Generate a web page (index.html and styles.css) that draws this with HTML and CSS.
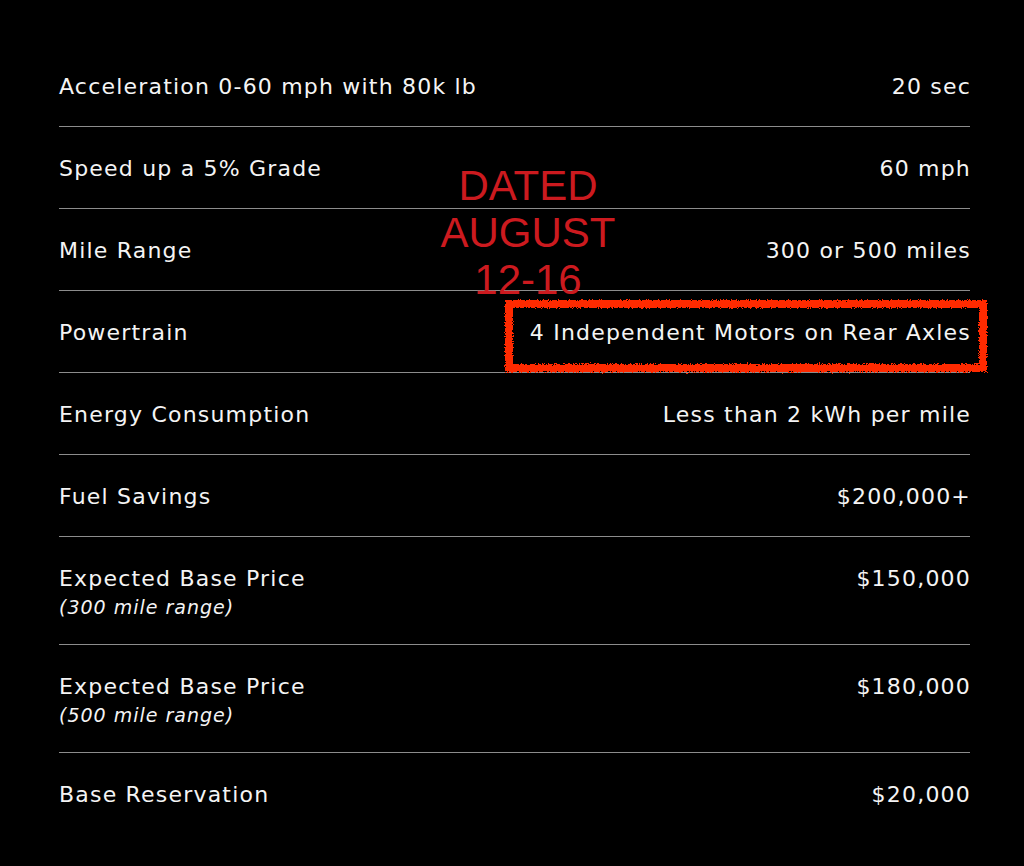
FILE: index.html
```html
<!DOCTYPE html>
<html lang="en">
<head>
<meta charset="utf-8">
<title>Specs</title>
<link rel="stylesheet" href="styles.css">
</head>
<body>
<svg class="defs" width="0" height="0" aria-hidden="true">
  <filter id="rough" x="-5%" y="-20%" width="110%" height="140%">
    <feTurbulence type="fractalNoise" baseFrequency="0.9" numOctaves="2" seed="3" result="n"/>
    <feDisplacementMap in="SourceGraphic" in2="n" scale="5" xChannelSelector="R" yChannelSelector="G"/>
  </filter>
</svg>
<main class="page">
  <div class="specs">
    <div class="row"><div class="label">Acceleration 0-60 mph with 80k lb</div><div class="value">20 sec</div></div>
    <div class="row"><div class="label">Speed up a 5% Grade</div><div class="value">60 mph</div></div>
    <div class="row"><div class="label">Mile Range</div><div class="value">300 or 500 miles</div></div>
    <div class="row"><div class="label">Powertrain</div><div class="value">4 Independent Motors on Rear Axles</div></div>
    <div class="row"><div class="label">Energy Consumption</div><div class="value">Less than 2 kWh per mile</div></div>
    <div class="row"><div class="label">Fuel Savings</div><div class="value">$200,000+</div></div>
    <div class="row tall"><div class="label">Expected Base Price<div class="sub">(300 mile range)</div></div><div class="value">$150,000</div></div>
    <div class="row tall"><div class="label">Expected Base Price<div class="sub">(500 mile range)</div></div><div class="value">$180,000</div></div>
    <div class="row last"><div class="label">Base Reservation</div><div class="value">$20,000</div></div>
  </div>
  <div class="stamp">DATED<br>AUGUST<br>12-16</div>
  <div class="highlight"></div>
</main>
</body>
</html>
```
FILE: styles.css
```css
html, body {
  margin: 0;
  padding: 0;
  background: #000;
}
.defs {
  position: absolute;
  width: 0;
  height: 0;
}
.page {
  position: relative;
  width: 1024px;
  height: 866px;
  overflow: hidden;
  font-family: "DejaVu Sans", "Open Sans", sans-serif;
  color: #f4f4f4;
}
.specs {
  padding: 45px 54px 0 59px;
}
.row {
  display: flex;
  justify-content: space-between;
  align-items: flex-start;
  padding: 30px 0 27px;
  border-bottom: 1px solid #8c8c8c;
  font-size: 22px;
  line-height: 24px;
  letter-spacing: 1.2px;
}
.row.tall {
  padding-bottom: 25px;
}
.row.last {
  border-bottom: none;
}
.value {
  text-align: right;
  margin-right: -1px;
}
.sub {
  margin-top: 4px;
  font-size: 19px;
  font-style: italic;
  letter-spacing: 1px;
}
.stamp {
  position: absolute;
  left: 408px;
  top: 162px;
  width: 240px;
  text-align: center;
  font-family: "Liberation Sans", Arial, sans-serif;
  font-size: 42px;
  line-height: 47px;
  color: #cc1a1f;
}
.highlight {
  position: absolute;
  left: 505px;
  top: 300px;
  width: 466px;
  height: 56px;
  border: 8px solid #ff2a06;
  filter: url(#rough);
}
```
